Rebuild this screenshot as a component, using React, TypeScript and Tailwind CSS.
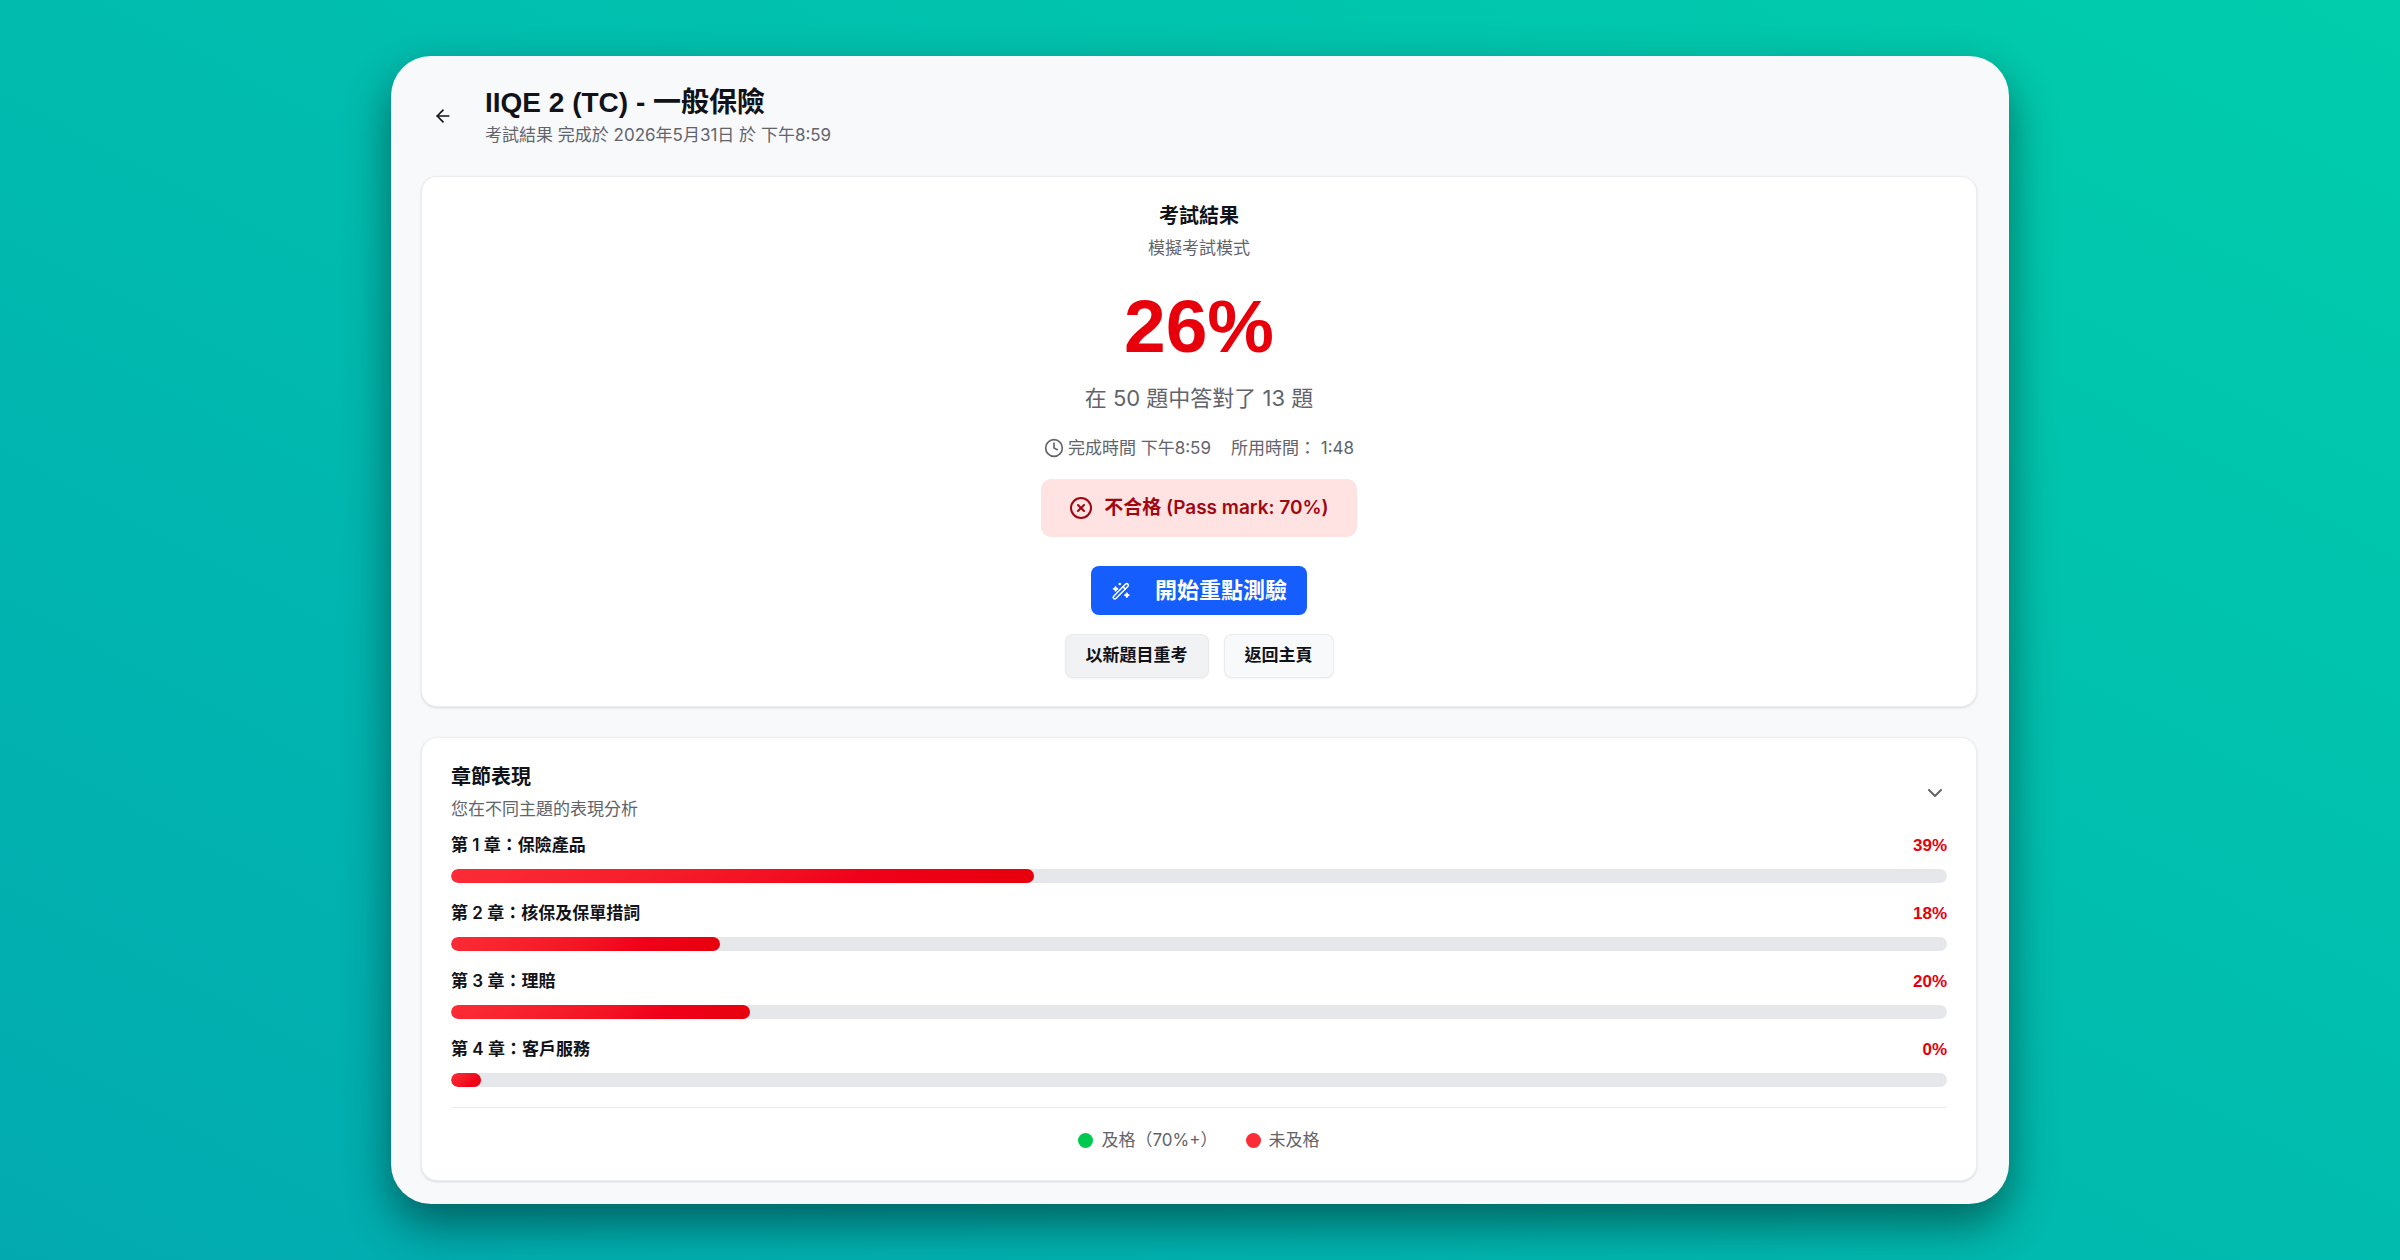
import { ArrowLeft, ChevronDown, CircleX, Clock } from "lucide-react";

const chapters = [
  { name: "第 1 章：保險產品", score: 39 },
  { name: "第 2 章：核保及保單措詞", score: 18 },
  { name: "第 3 章：理賠", score: 20 },
  { name: "第 4 章：客戶服務", score: 0 },
];

function WandIcon() {
  return (
    <svg viewBox="0 0 24 24" className="size-5" fill="none" stroke="currentColor" strokeWidth="1.8" strokeLinecap="round" strokeLinejoin="round" aria-hidden="true">
      <path d="M3.2 18.2 17.6 3.6a2 2 0 0 1 2.8 2.8L5.9 20.9a1.9 1.9 0 0 1-2.7-2.7Z" />
      <path d="m14.5 6.8 2.7 2.7" />
      <path fill="currentColor" d="m5.5 7 .8 1.7 1.7.8-1.7.8-.8 1.7-.8-1.7L3 9.5l1.7-.8ZM19 14.5l.8 1.7 1.7.8-1.7.8-.8 1.7-.8-1.7-1.7-.8 1.7-.8Z" />
      <path d="M10.5 3.5v.1" strokeWidth="3" />
    </svg>
  );
}

function ScoreCard() {
  return (
    <section className="flex flex-col items-center rounded-2xl border border-gray-200/70 bg-white px-[29px] pb-7 shadow-sm">
      <h2 className="mt-[25px] text-[20px] leading-7 font-bold">考試結果</h2>
      <p className="mt-1 text-[17px] leading-7 text-[#62646c]">模擬考試模式</p>
      <p className="mt-[26px] font-['Liberation_Sans',sans-serif] text-[75px] leading-[76px] font-bold text-[#e7000b]">26%</p>
      <p className="mt-[18px] text-[22px] leading-8 text-[#62646c]">在 50 題中答對了 13 題</p>
      <div className="mt-[22px] flex items-center gap-5 text-[17px] leading-6 text-[#62646c]">
        <span className="flex items-center gap-1">
          <Clock className="size-5" strokeWidth={2} />
          完成時間 下午8:59
        </span>
        <span>所用時間： 1:48</span>
      </div>
      <div className="mt-[19px] flex h-[58px] items-center gap-[11px] rounded-[10px] bg-[#ffe2e2] px-7 text-[19px] font-semibold text-[#9f0712]">
        <CircleX className="size-6" />
        不合格 (Pass mark: 70%)
      </div>
      <button className="mt-[29px] flex h-[49px] items-center gap-6 rounded-lg bg-[#155dfc] px-5 text-[22px] font-bold text-white">
        <WandIcon />
        開始重點測驗
      </button>
      <div className="mt-[19px] flex gap-[15px] text-[17px] font-semibold">
        <button className="h-11 rounded-lg border border-gray-200/80 bg-[#f1f2f4] px-5 shadow-xs">以新題目重考</button>
        <button className="h-11 rounded-lg border border-gray-200/80 bg-[#f8f9fb] px-5 shadow-xs">返回主頁</button>
      </div>
    </section>
  );
}

function ChapterCard() {
  return (
    <section className="mt-[30px] rounded-2xl border border-gray-200/70 bg-white px-[29px] pb-7 shadow-sm">
      <div className="flex items-center justify-between pt-[25px]">
        <div>
          <h2 className="text-[20px] leading-7 font-bold">章節表現</h2>
          <p className="mt-1 text-[17px] leading-7 text-[#62646c]">您在不同主題的表現分析</p>
        </div>
        <button aria-label="收合章節表現" className="text-[#62646c]">
          <ChevronDown className="size-6" />
        </button>
      </div>
      <ul className="mt-2.5 flex flex-col gap-[18px]">
        {chapters.map((c) => (
          <li key={c.name}>
            <div className="flex items-center justify-between text-[17px] leading-[25px] font-semibold">
              <span>{c.name}</span>
              <span className="font-['Liberation_Sans',sans-serif] text-[#e7000b]">{c.score}%</span>
            </div>
            <div className="mt-[11px] h-3.5 overflow-hidden rounded-full bg-[#e5e7eb]">
              <div
                className="h-full rounded-full bg-linear-135 from-[#fb2c36] via-[#f0001a] via-70% to-[#e7000b]"
                style={{ width: `${Math.max(c.score, 2)}%` }}
              />
            </div>
          </li>
        ))}
      </ul>
      <div className="mt-5 flex justify-center gap-7 border-t border-gray-200/80 pt-5 text-[17px] leading-6 text-[#62646c]">
        <span className="flex items-center gap-2">
          <i className="size-[15px] rounded-full bg-[#00c950]" />
          及格（70%+）
        </span>
        <span className="flex items-center gap-2">
          <i className="size-[15px] rounded-full bg-[#fb2c36]" />
          未及格
        </span>
      </div>
    </section>
  );
}

export default function App() {
  return (
    <div className="min-h-screen bg-linear-to-tr from-[#02aab0] to-[#00cdac] px-[391px] py-14 font-['Inter','Noto_Sans_CJK_TC',sans-serif] text-[#111318]">
      <main className="rounded-[40px] bg-[#f8f9fb] pt-7 pr-8 pb-[23px] pl-[30px] shadow-[0_20px_46px_rgba(0,0,0,0.45)]">
        <header className="mb-7 flex items-center gap-5">
          <button aria-label="返回" className="flex size-11 items-center justify-center">
            <ArrowLeft className="size-5" />
          </button>
          <div>
            <h1 className="font-['Liberation_Sans','Noto_Sans_CJK_TC',sans-serif] text-[28px] leading-[38px] font-bold">IIQE 2 (TC) - 一般保險</h1>
            <p className="text-[17px] leading-[26px] text-[#62646c]">考試結果 完成於 2026年5月31日 於 下午8:59</p>
          </div>
        </header>
        <ScoreCard />
        <ChapterCard />
      </main>
    </div>
  );
}
